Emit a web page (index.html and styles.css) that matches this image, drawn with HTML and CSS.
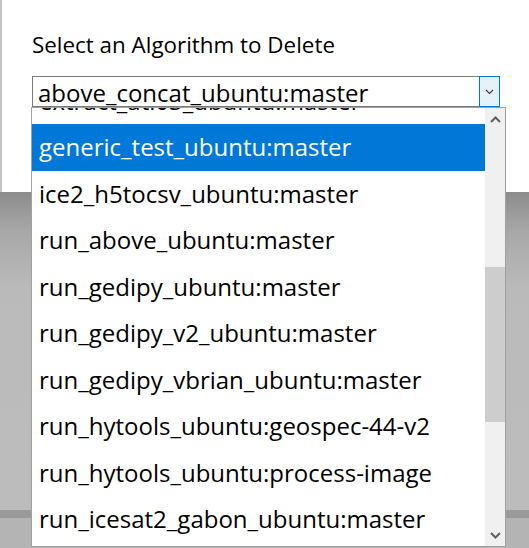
FILE: index.html
```html
<!DOCTYPE html>
<html>
<head>
<meta charset="utf-8">
<link rel="stylesheet" href="styles.css">
</head>
<body>
<div class="screen">
  <div class="dialog">
    <div class="title">Select an Algorithm to Delete</div>
    <div class="combo">
      <div class="combo-value">above_concat_ubuntu:master</div>
      <div class="combo-btn">
        <svg width="9" height="6" viewBox="0 0 9 6"><path d="M1 1 L4.5 4.5 L8 1" fill="none" stroke="#3c3c3c" stroke-width="1.1"/></svg>
      </div>
    </div>
  </div>
  <div class="shade"></div>

  <div class="popup">
    <div class="items">
      <div class="list">
        <div class="item">extract_atl03_ubuntu:master</div>
        <div class="item selected">generic_test_ubuntu:master</div>
        <div class="item">ice2_h5tocsv_ubuntu:master</div>
        <div class="item">run_above_ubuntu:master</div>
        <div class="item">run_gedipy_ubuntu:master</div>
        <div class="item">run_gedipy_v2_ubuntu:master</div>
        <div class="item">run_gedipy_vbrian_ubuntu:master</div>
        <div class="item">run_hytools_ubuntu:geospec-44-v2</div>
        <div class="item">run_hytools_ubuntu:process-image</div>
        <div class="item">run_icesat2_gabon_ubuntu:master</div>
      </div>
    </div>
    <div class="scrollbar">
      <div class="arrow">
        <svg width="11" height="7" viewBox="0 0 11 7"><path d="M1 6 L5.5 1.5 L10 6" fill="none" stroke="#606060" stroke-width="2"/></svg>
      </div>
      <div class="track">
        <div class="thumb"></div>
      </div>
      <div class="arrow">
        <svg width="11" height="7" viewBox="0 0 11 7"><path d="M1 1 L5.5 5.5 L10 1" fill="none" stroke="#606060" stroke-width="2"/></svg>
      </div>
    </div>
  </div>
</div>
</body>
</html>
```
FILE: styles.css
```css
html, body {
  margin: 0;
  padding: 0;
}
body {
  width: 529px;
  height: 548px;
  overflow: hidden;
  font-family: "Open Sans", "Noto Sans", sans-serif;
  color: #000;
}
.screen {
  position: relative;
  width: 529px;
  height: 548px;
  display: flex;
  flex-direction: column;
  background: #c4c4c4;
}
.dialog {
  height: 192px;
  margin-left: 2px;
  background: #fff;
  padding: 30px 0 0 30px;
  box-sizing: border-box;
}
.title {
  font-size: 22.4px;
  line-height: 30px;
  height: 30px;
}
.combo {
  margin-top: 16px;
  width: 468px;
  height: 31px;
  box-sizing: border-box;
  border: 1px solid #7a7a7a;
  display: flex;
  background: #fff;
}
.combo-value {
  flex: 1;
  font-size: 24px;
  line-height: 29px;
  padding: 1px 0 0 5px;
  white-space: nowrap;
  overflow: hidden;
}
.combo-btn {
  width: 21px;
  margin: -1px -1px -1px 0;
  box-sizing: border-box;
  border: 1px solid #0078d7;
  background: #e5f1fb;
  display: flex;
  align-items: center;
  justify-content: center;
  padding-top: 1px;
}
.shade {
  flex: 1;
  background: linear-gradient(to bottom,
    #8c8c8c 0px, #a8a8a8 40px, #bababa 95px, #bcbcbc 318px,
    #9a9a9a 318px, #9a9a9a 326px, #b4b4b4 326px, #b4b4b4 100%);
}
.popup {
  position: absolute;
  left: 31px;
  top: 107px;
  width: 475px;
  height: 440px;
  box-sizing: border-box;
  border: 1px solid #a0a0a0;
  background: #fff;
  display: flex;
}
.items {
  flex: 1;
  overflow: hidden;
}
.list {
  margin-top: -30.5px;
}
.item {
  height: 46.5px;
  line-height: 46.5px;
  font-size: 24px;
  padding-left: 7px;
  white-space: nowrap;
}
.item.selected {
  background: #0078d7;
  color: #fff;
}
.scrollbar {
  width: 20px;
  background: #f0f0f0;
  display: flex;
  flex-direction: column;
}
.arrow {
  height: 22px;
  display: flex;
  align-items: center;
  justify-content: center;
}
.track {
  flex: 1;
  padding-top: 137px;
}
.thumb {
  height: 155px;
  background: #cdcdcd;
}
```
